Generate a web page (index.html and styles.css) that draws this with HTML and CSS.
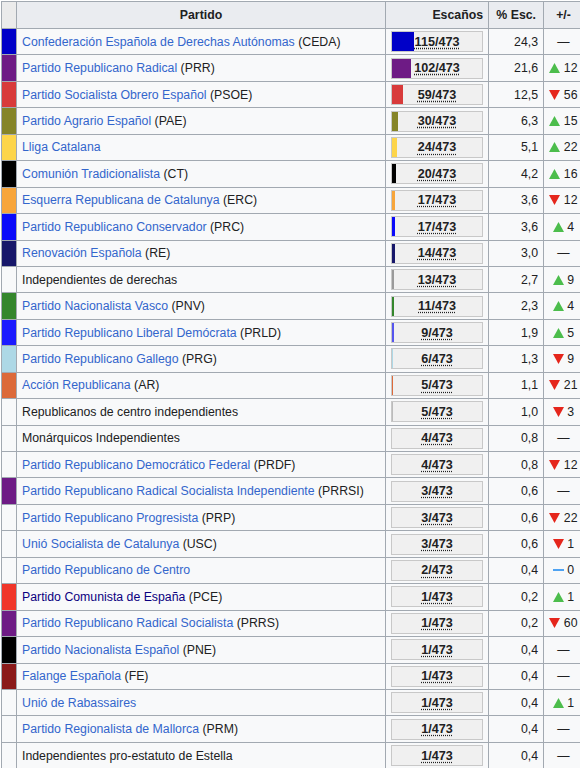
FILE: index.html
```html
<!DOCTYPE html>
<html lang="es">
<head>
<meta charset="utf-8">
<title>Resultados</title>
<link rel="stylesheet" href="styles.css">
</head>
<body>
<table class="results">
  <colgroup>
    <col class="c-swatch"><col class="c-party"><col class="c-seats"><col class="c-pct"><col class="c-change">
  </colgroup>
  <thead>
    <tr>
      <th class="swatch-h"></th>
      <th class="party-h">Partido</th>
      <th class="seats-h">Escaños</th>
      <th class="pct-h">% Esc.</th>
      <th class="change-h">+/-</th>
    </tr>
  </thead>
  <tbody id="rows"></tbody>
</table>
<script src="app.js"></script>
</body>
</html>
```

FILE: app.js
```js
const data = [
  ["#0000c8", "Confederación Española de Derechas Autónomas", "CEDA", 115, "24,3", "eq", "", "link"],
  ["#6e1b85", "Partido Republicano Radical", "PRR", 102, "21,6", "up", "12", "link"],
  ["#d83b3b", "Partido Socialista Obrero Español", "PSOE", 59, "12,5", "down", "56", "link"],
  ["#858428", "Partido Agrario Español", "PAE", 30, "6,3", "up", "15", "link"],
  ["#fdd54a", "Lliga Catalana", "", 24, "5,1", "up", "22", "link"],
  ["#000000", "Comunión Tradicionalista", "CT", 20, "4,2", "up", "16", "link"],
  ["#f7a53b", "Esquerra Republicana de Catalunya", "ERC", 17, "3,6", "down", "12", "link"],
  ["#0a0afa", "Partido Republicano Conservador", "PRC", 17, "3,6", "up", "4", "link"],
  ["#17176a", "Renovación Española", "RE", 14, "3,0", "eq", "", "link"],
  ["", "Independientes de derechas", "", 13, "2,7", "up", "9", "text", "#9a9a9a"],
  ["#34862c", "Partido Nacionalista Vasco", "PNV", 11, "2,3", "up", "4", "link"],
  ["#1b1bff", "Partido Republicano Liberal Demócrata", "PRLD", 9, "1,9", "up", "5", "link", "#5555ee"],
  ["#add8e6", "Partido Republicano Gallego", "PRG", 6, "1,3", "down", "9", "link"],
  ["#dc6a3a", "Acción Republicana", "AR", 5, "1,1", "down", "21", "link"],
  ["", "Republicanos de centro independientes", "", 5, "1,0", "down", "3", "text", "#bbbbbb"],
  ["", "Monárquicos Independientes", "", 4, "0,8", "eq", "", "text", "transparent"],
  ["", "Partido Republicano Democrático Federal", "PRDF", 4, "0,8", "down", "12", "link", "transparent"],
  ["#6e1b85", "Partido Republicano Radical Socialista Independiente", "PRRSI", 3, "0,6", "eq", "", "link"],
  ["", "Partido Republicano Progresista", "PRP", 3, "0,6", "down", "22", "link", "transparent"],
  ["", "Unió Socialista de Catalunya", "USC", 3, "0,6", "down", "1", "link", "transparent"],
  ["", "Partido Republicano de Centro", "", 2, "0,4", "steady", "0", "link", "transparent"],
  ["#f0362a", "Partido Comunista de España", "PCE", 1, "0,2", "up", "1", "visited"],
  ["#6e1b85", "Partido Republicano Radical Socialista", "PRRS", 1, "0,2", "down", "60", "link"],
  ["#000000", "Partido Nacionalista Español", "PNE", 1, "0,4", "eq", "", "link"],
  ["#8b1a1a", "Falange Española", "FE", 1, "0,4", "eq", "", "link"],
  ["", "Unió de Rabassaires", "", 1, "0,4", "up", "1", "link", "transparent"],
  ["", "Partido Regionalista de Mallorca", "PRM", 1, "0,4", "eq", "", "link", "transparent"],
  ["", "Independientes pro-estatuto de Estella", "", 1, "0,4", "eq", "", "text", "transparent"]
];

const up = '<svg class="tri" width="11" height="10" viewBox="0 0 11 10"><polygon points="5.5,0 11,10 0,10" fill="#4cbd4c"/></svg>';
const down = '<svg class="tri" width="11" height="10" viewBox="0 0 11 10"><polygon points="0,0 11,0 5.5,10" fill="#e5261c"/></svg>';
const steady = '<svg class="tri steady" width="11" height="10" viewBox="0 0 11 10"><rect x="0" y="4" width="11" height="2" fill="#4fa3f2"/></svg>';

const tbody = document.getElementById("rows");
for (const [color, name, abbr, seats, pct, dir, delta, kind, barColor] of data) {
  const tr = document.createElement("tr");
  let partyHtml;
  if (kind === "text") {
    partyHtml = name;
  } else {
    const cls = kind === "visited" ? "plink visited" : "plink";
    partyHtml = `<a class="${cls}" href="#">${name}</a>`;
  }
  if (abbr) partyHtml += ` (${abbr})`;
  const bc = seats < 4 ? "transparent" : (barColor || color);
  const w = (seats / 473 * 100).toFixed(2);
  let change;
  if (dir === "eq") change = '<span class="dash">—</span>';
  else if (dir === "up") change = `${up} ${delta}`;
  else if (dir === "down") change = `${down} ${delta}`;
  else change = `${steady} ${delta}`;
  tr.innerHTML =
    `<td class="swatch"${color ? ` style="background:${color}"` : ""}></td>` +
    `<td class="party">${partyHtml}</td>` +
    `<td class="seats"><div class="bar-box"><span class="bar" style="width:${w}%;background:${bc}"></span><abbr class="count">${seats}/473</abbr></div></td>` +
    `<td class="pct">${pct}</td>` +
    `<td class="change">${change}</td>`;
  tbody.appendChild(tr);
}
```

FILE: styles.css
```css
html, body {
  margin: 0;
  padding: 0;
  background: #ffffff;
}
body {
  font-family: "Liberation Sans", Arial, sans-serif;
  font-size: 12.3px;
  color: #202122;
  overflow: hidden;
}
.results {
  border-collapse: collapse;
  table-layout: fixed;
  width: 582px;
  margin: 1px 0 0 1px;
  background: #f8f9fa;
  border: 1px solid #a2a9b1;
}
.c-swatch { width: 15px; }
.c-party { width: 369px; }
.c-seats { width: 103px; }
.c-pct { width: 55px; }
.c-change { width: 40px; }

.results th,
.results td {
  border: 1px solid #a2a9b1;
  padding: 0 5px;
  white-space: nowrap;
  overflow: hidden;
}
.results thead tr { height: 27px; }
.results tbody tr { height: 26.45px; }
.results th {
  background: #eaecf0;
  font-weight: bold;
  text-align: center;
}
.results th.swatch-h { background: #ebebeb; padding: 0; }
.results th.seats-h,
.results th.pct-h { text-align: right; }
.results th.pct-h { padding-right: 7px; }

.results td.swatch { padding: 0; }
.party { text-align: left; }
.plink { color: #3366cc; text-decoration: none; }
.plink.visited { color: #0b0080; }

.seats { padding: 0 5px; }
.bar-box {
  position: relative;
  height: 19px;
  border: 1px solid #c8c8c8;
  background: #f0f0f0;
  display: flex;
  align-items: center;
  justify-content: center;
}
.bar {
  position: absolute;
  left: 0;
  top: 0;
  bottom: 0;
}
.count {
  position: relative;
  font-weight: bold;
  font-size: 12.6px;
  color: #202122;
  text-decoration: underline dotted;
  text-underline-offset: 2px;
}
.pct { text-align: right; padding-right: 6px; }
.change { text-align: center; padding: 0 2px; }
.tri { vertical-align: -1px; }
.dash { color: #202122; }
```
